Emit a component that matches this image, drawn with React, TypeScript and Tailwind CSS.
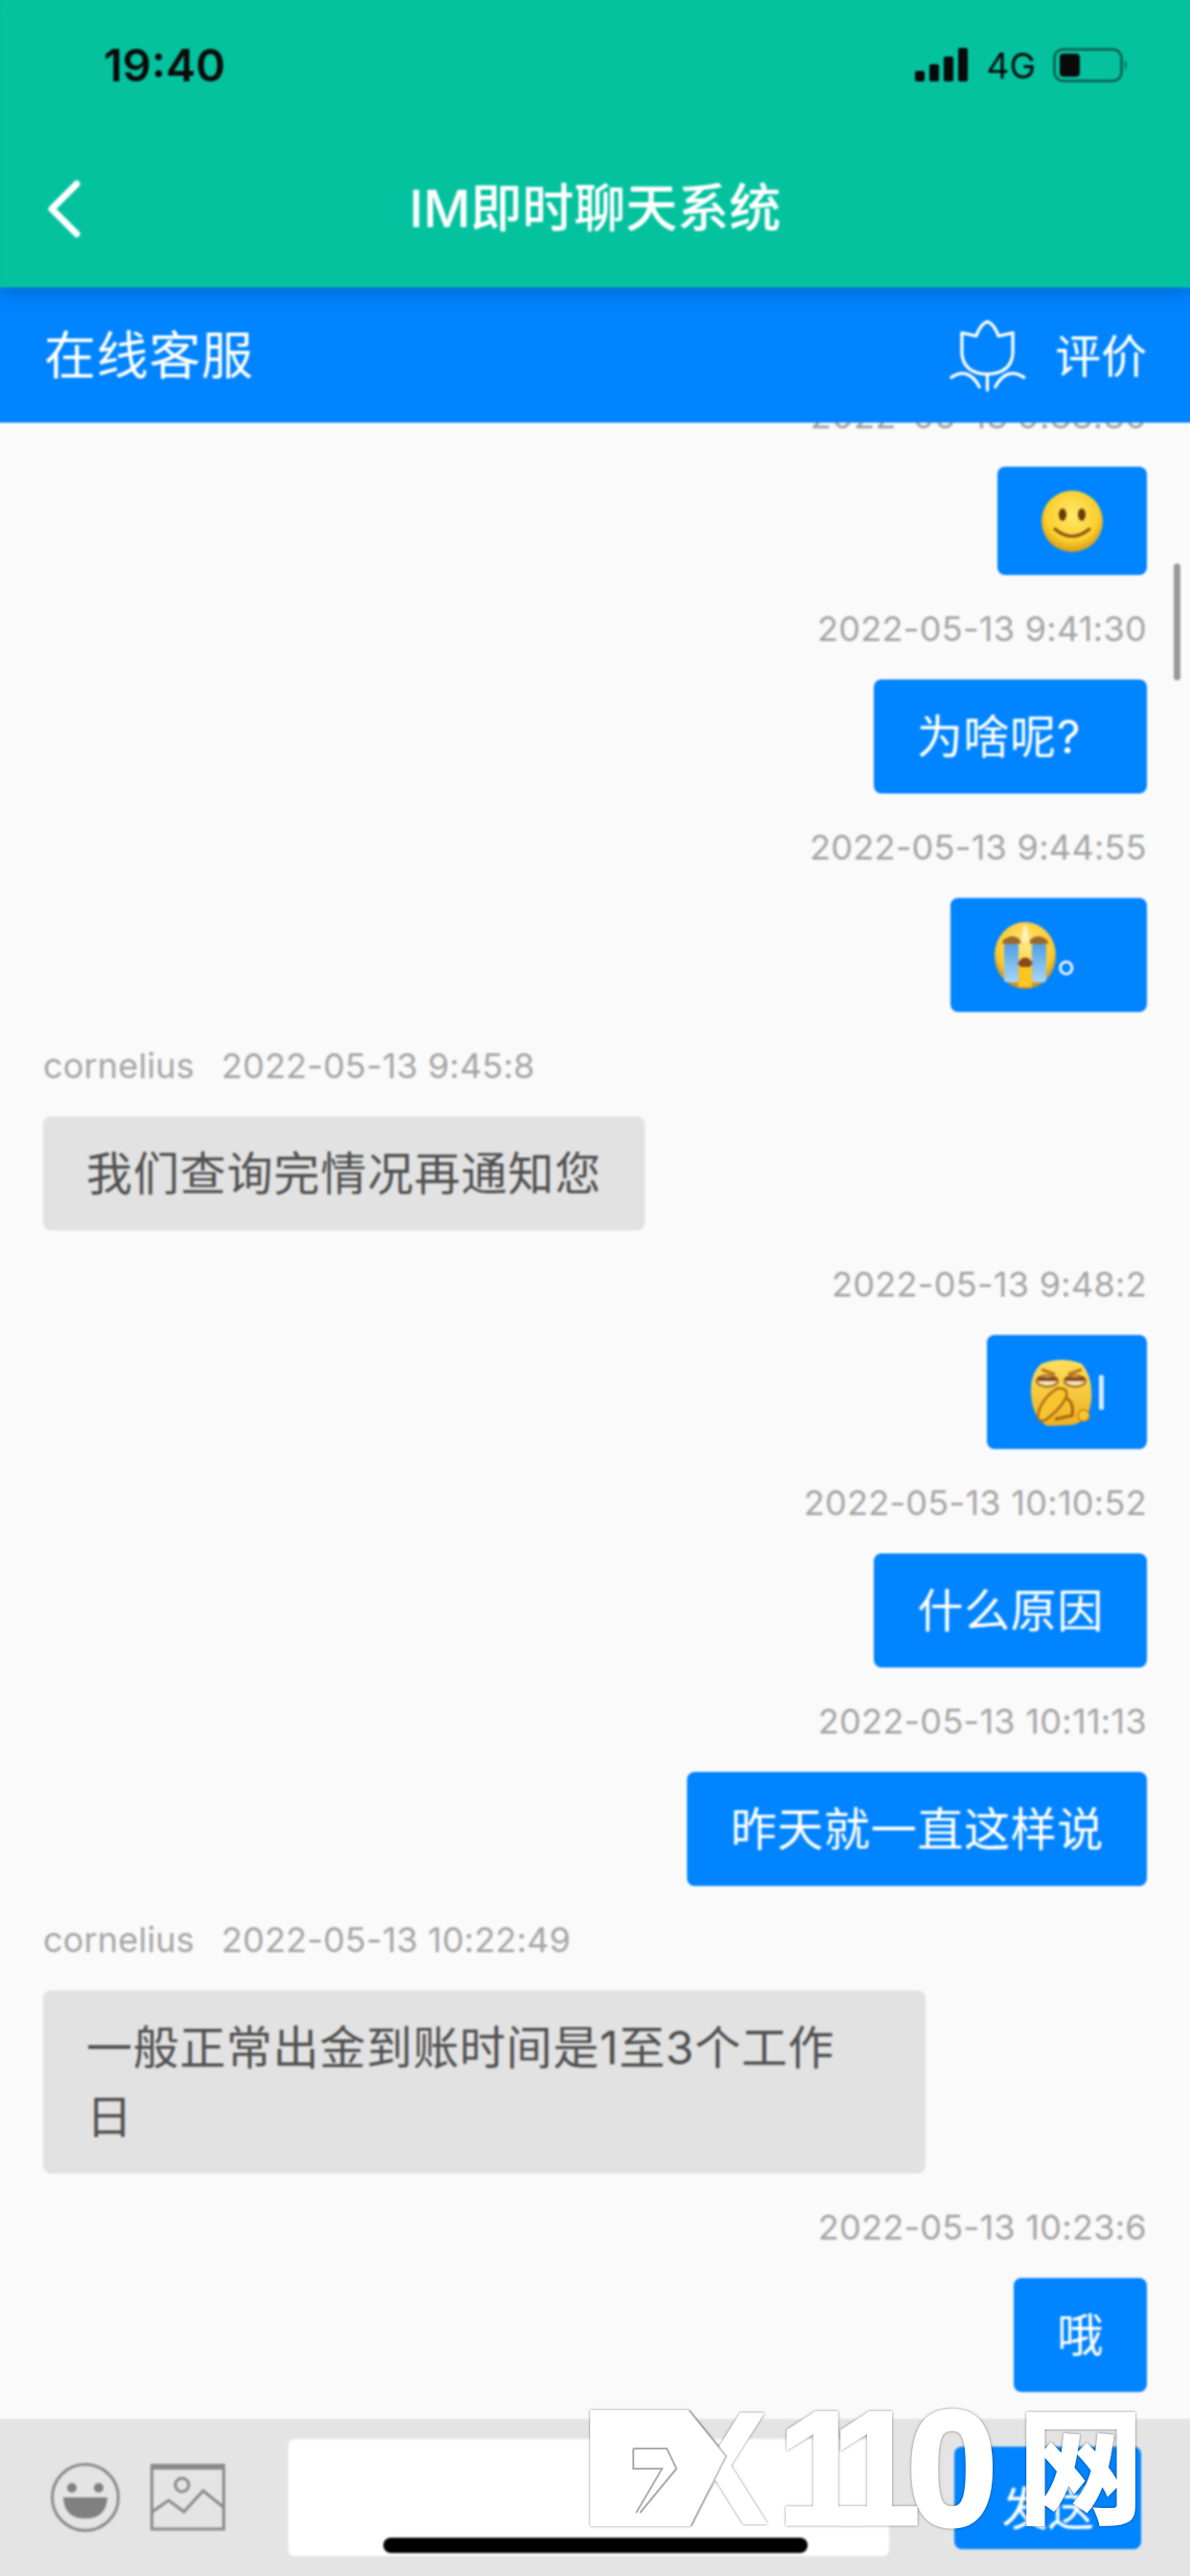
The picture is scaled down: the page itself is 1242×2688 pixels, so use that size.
import React from "react";

function Smile() {
  return (
    <svg width="66" height="66" viewBox="0 0 66 66" className="block">
      <defs>
        <radialGradient id="sm" cx="50%" cy="40%" r="60%">
          <stop offset="0%" stopColor="#ffe96a" />
          <stop offset="70%" stopColor="#fbcf2e" />
          <stop offset="100%" stopColor="#d99a12" />
        </radialGradient>
      </defs>
      <circle cx="33" cy="33" r="32" fill="url(#sm)" />
      <ellipse cx="23" cy="26" rx="4" ry="6.5" fill="#6b3d0c" />
      <ellipse cx="43" cy="26" rx="4" ry="6.5" fill="#6b3d0c" />
      <path d="M15 41 Q33 56 51 41" fill="none" stroke="#8a5310" strokeWidth="3" strokeLinecap="round" />
    </svg>
  );
}

function Cry() {
  return (
    <svg width="66" height="72" viewBox="0 0 66 72" className="block">
      <defs>
        <radialGradient id="cr" cx="50%" cy="35%" r="62%">
          <stop offset="0%" stopColor="#ffe680" />
          <stop offset="75%" stopColor="#fbc92c" />
          <stop offset="100%" stopColor="#c98f20" />
        </radialGradient>
        <linearGradient id="tear" x1="0" x2="0" y1="0" y2="1">
          <stop offset="0%" stopColor="#4f9fe6" />
          <stop offset="100%" stopColor="#a8d6f7" />
        </linearGradient>
      </defs>
      <ellipse cx="33" cy="36" rx="32" ry="35" fill="url(#cr)" />
      <path d="M10 20 Q20 12 28 20 L28 24 L9 24 Z M38 20 Q46 12 56 20 L57 24 L38 24 Z" fill="#9a6a2a" />
      <path d="M31 5 L35 5 L37 22 L29 22 Z" fill="#fff1b8" />
      <rect x="11" y="24" width="15" height="40" rx="3" fill="url(#tear)" />
      <rect x="40" y="24" width="15" height="40" rx="3" fill="url(#tear)" />
      <path d="M25 44 Q33 32 41 44 L38 48 L28 48 Z" fill="#8a4a1c" />
      <rect x="26" y="48" width="14" height="21" fill="#fcc51f" />
    </svg>
  );
}

function Think() {
  return (
    <svg width="66" height="72" viewBox="0 0 66 72" className="block">
      <defs>
        <linearGradient id="th" x1="0" x2="0" y1="0" y2="1">
          <stop offset="0%" stopColor="#ffdf5e" />
          <stop offset="100%" stopColor="#eeb11e" />
        </linearGradient>
      </defs>
      <path d="M12 6 Q33 -2 54 6 Q66 20 64 44 Q62 66 44 70 L18 71 Q2 62 1 36 Q0 16 12 6 Z" fill="url(#th)" />
      <path d="M12 12 L26 17 M54 12 L40 17" stroke="#b5771a" strokeWidth="3" />
      <ellipse cx="18" cy="24" rx="11" ry="6" fill="#f3e1bd" stroke="#a36a1a" strokeWidth="2" />
      <ellipse cx="47" cy="24" rx="11" ry="6" fill="#f3e1bd" stroke="#a36a1a" strokeWidth="2" />
      <path d="M8 22 H28 M37 22 H57" stroke="#8a4a1c" strokeWidth="4" />
      <path d="M8 62 Q10 44 28 32 Q40 30 38 40 Q34 50 22 60 Q12 70 8 62 Z" fill="#f8c531" stroke="#b06d12" strokeWidth="2.5" />
      <path d="M38 42 Q46 46 44 60 L26 64" fill="none" stroke="#a86510" strokeWidth="3" />
      <circle cx="56" cy="60" r="6" fill="#f8c531" stroke="#c98414" strokeWidth="1.5" />
    </svg>
  );
}

function Stamp({ children }: { children: React.ReactNode }) {
  return <div className="mt-[31px] mb-[28px] text-right text-[36px] leading-[50px] tracking-[0.3px] text-[#a6a6a6]">{children}</div>;
}

function MeText({ children }: { children: React.ReactNode }) {
  return (
    <div className="self-end rounded-[8px] bg-[#0084ff] px-[45px] py-[23.5px] text-[48px] leading-[72px] tracking-[0.7px] text-white">
      {children}
    </div>
  );
}

function Their({ name, time, children }: { name: string; time: string; children: React.ReactNode }) {
  return (
    <>
      <div className="mt-[31px] mb-[28px] flex gap-[28px] text-[36px] leading-[50px] tracking-[0.2px] text-[#a6a6a6]">
        <span>{name}</span>
        <span>{time}</span>
      </div>
      <div className="self-start rounded-[8px] bg-[#e2e2e2] px-[45px] py-[23.5px] text-[48px] leading-[72px] tracking-[0.7px] text-[#505050]">
        {children}
      </div>
    </>
  );
}

export default function App() {
  return (
    <div className="relative h-[2688px] w-[1242px] overflow-hidden">
      <div className="-m-[8px] h-[2704px] w-[1258px] bg-[linear-gradient(#05c29f_0_308px,#0084ff_308px_449px,#fafafa_449px_2532px,#e4e4e4_2532px)] p-[8px] blur-[1.2px]">
        <div className="relative flex h-[2688px] w-[1242px] flex-col font-['Inter','Noto_Sans_CJK_SC',sans-serif]">
          <header className="z-10 h-[300px] shrink-0 bg-[#05c29f] shadow-[0_6px_18px_rgba(0,60,120,0.35)]">
            <div className="flex h-[136px] items-center justify-between pl-[108px] pr-[63px]">
              <span className="text-[47px] font-semibold text-[#0a0a0a]">19:40</span>
              <div className="flex items-center">
                <svg width="56" height="36" viewBox="0 0 56 36" className="block">
                  <rect x="0" y="24" width="10" height="11" rx="2" fill="#0a0a0a" />
                  <rect x="15" y="17" width="10" height="18" rx="2" fill="#0a0a0a" />
                  <rect x="30" y="9" width="10" height="26" rx="2" fill="#0a0a0a" />
                  <rect x="45" y="0" width="10" height="35" rx="2" fill="#0a0a0a" />
                </svg>
                <span className="ml-[18px] text-[37px] leading-none text-[#0a0a0a]">4G</span>
                <svg width="80" height="36" viewBox="0 0 80 36" className="ml-[18px] block">
                  <rect x="1.5" y="1.5" width="70" height="33" rx="9" fill="none" stroke="#0a5a4a" strokeWidth="2.5" />
                  <rect x="7" y="6" width="21" height="24" rx="4" fill="#0a0a0a" />
                  <path d="M75 12 Q79 18 75 24 Z" fill="#0a6a55" />
                </svg>
              </div>
            </div>
            <div className="grid h-[164px] grid-cols-[1fr_auto_1fr] items-center pl-[48px]">
              <svg width="38" height="62" viewBox="0 0 38 62" className="block" fill="none" stroke="#ffffff" strokeWidth="7" strokeLinecap="round" strokeLinejoin="round">
                <path d="M32 5 L6 31 L32 57" />
              </svg>
              <div className="pr-[48px] text-[54px] font-medium leading-none text-white">IM即时聊天系统</div>
              <div />
            </div>
          </header>

          <div className="flex h-[141px] shrink-0 items-center justify-between bg-[#0084ff] pl-[46px] pr-[45px]">
            <span className="pt-[2px] text-[54px] leading-none tracking-[0.7px] text-white">在线客服</span>
            <div className="flex items-center gap-[29px]">
              <svg width="83" height="77" viewBox="80 40 250 230" fill="none" stroke="#ffffff" strokeWidth="10" strokeLinecap="round" strokeLinejoin="round" className="block">
                <path d="M125 85 L170 95 Q185 55 205 50 Q225 55 240 95 L285 85 L285 150 Q280 212 205 215 Q130 212 125 150 Z" />
                <path d="M205 215 L205 265 M92 225 Q145 190 180 255 M320 225 Q265 190 230 255" />
              </svg>
              <span className="pt-[2px] text-[48px] leading-none text-white">评价</span>
            </div>
          </div>

          <main className="relative flex min-h-0 flex-1 flex-col justify-end overflow-hidden bg-[#fafafa] px-[45px] pb-[28px]">
            <Stamp>2022-05-13 9:38:30</Stamp>
            <MeText>
              <div className="h-[66px]"><Smile /></div>
            </MeText>
            <Stamp>2022-05-13 9:41:30</Stamp>
            <MeText>
              <span className="mr-[24px]">为啥呢?</span>
            </MeText>
            <Stamp>2022-05-13 9:44:55</Stamp>
            <MeText>
              <div className="flex h-[72px] items-start">
                <Cry />
                <span>。</span>
              </div>
            </MeText>
            <Their name="cornelius" time="2022-05-13 9:45:8">
              <span className="tracking-[0.9px]">我们查询完情况再通知您</span>
            </Their>
            <Stamp>2022-05-13 9:48:2</Stamp>
            <MeText>
              <div className="flex h-[72px] items-center gap-[6px]">
                <Think />
                <div className="h-[36px] w-[5px] bg-[#d8ecff]" />
              </div>
            </MeText>
            <Stamp>2022-05-13 10:10:52</Stamp>
            <MeText>什么原因</MeText>
            <Stamp>2022-05-13 10:11:13</Stamp>
            <MeText>昨天就一直这样说</MeText>
            <Their name="cornelius" time="2022-05-13 10:22:49">
              <div className="w-[831px]">
                一般正常出金到账时间是1至3个工作
                <br />日
              </div>
            </Their>
            <Stamp>2022-05-13 10:23:6</Stamp>
            <MeText>哦</MeText>
            <div className="absolute right-[10px] top-[147px] h-[122px] w-[7px] rounded-full bg-[#9a9a9a]" />
          </main>

          <footer className="flex h-[164px] shrink-0 items-center bg-[#e4e4e4] px-[52px]">
            <svg width="74" height="74" viewBox="0 0 74 74" className="block shrink-0">
              <circle cx="37" cy="37" r="34.5" fill="none" stroke="#8a8a8a" strokeWidth="3" />
              <circle cx="23" cy="27" r="5" fill="#808080" />
              <circle cx="51" cy="27" r="5" fill="#808080" />
              <path d="M14 37 H60 Q59 59 37 59 Q15 59 14 37 Z" fill="#808080" />
            </svg>
            <svg width="78" height="70" viewBox="0 0 78 70" className="ml-[31px] block shrink-0" fill="none" stroke="#8a8a8a">
              <rect x="1.5" y="3" width="75" height="65" strokeWidth="3" />
              <path d="M0 3 H78" strokeWidth="6" />
              <circle cx="33" cy="22" r="7" strokeWidth="3" />
              <path d="M2 50 L19 38 L35 50 L55 28 L76 45" strokeWidth="3" />
            </svg>
            <div className="ml-[66px] h-[122px] w-[627px] shrink-0 rounded-[6px] bg-white" />
            <div className="ml-[68px] flex h-[107px] w-[195px] shrink-0 items-center justify-center rounded-[8px] bg-[#0084ff] pt-[24px] text-[48px] leading-none text-white">
              发送
            </div>
          </footer>

          <div className="absolute bottom-[24px] left-[400px] h-[16px] w-[443px] rounded-full bg-black" />
        </div>
      </div>

      <div className="absolute left-[616px] top-[2515px] h-[122px] w-[572px] [filter:drop-shadow(0_0_1.5px_rgba(0,0,0,0.45))]">
        <svg width="184" height="122" viewBox="0 0 184 122" className="absolute left-0 top-0 block">
          <path d="M0 0 H103 L142 48 L105 121 H0 Z" fill="#ffffff" />
        </svg>
        <div className="absolute -top-[27px] left-0 flex whitespace-nowrap font-['Liberation_Sans','Noto_Sans_CJK_SC',sans-serif] text-[168px] font-bold leading-[176px] text-white">
          <span className="w-[195px]">
            <span className="tracking-[-28px]">F</span>X
          </span>
          <span className="w-[136px] tracking-[-28px] [-webkit-text-stroke:3px_#ffffff]">11</span>
          <span className="w-[115px] [-webkit-text-stroke:5px_#ffffff]">0</span>
          <span className="mt-[12px] font-['Noto_Sans_CJK_SC',sans-serif] text-[132px] font-black leading-[132px]">网</span>
        </div>
      </div>
      <svg width="184" height="122" viewBox="0 0 184 122" className="absolute left-[616px] top-[2515px] block">
        <path d="M103 0 L142 48 L105 121" fill="none" stroke="rgba(0,0,0,0.22)" strokeWidth="2" />
        <path d="M45 40 H80 L90 61 L52 107 M45 40 V61 H75 L48 107" fill="none" stroke="rgba(0,0,0,0.32)" strokeWidth="2" />
      </svg>
    </div>
  );
}
